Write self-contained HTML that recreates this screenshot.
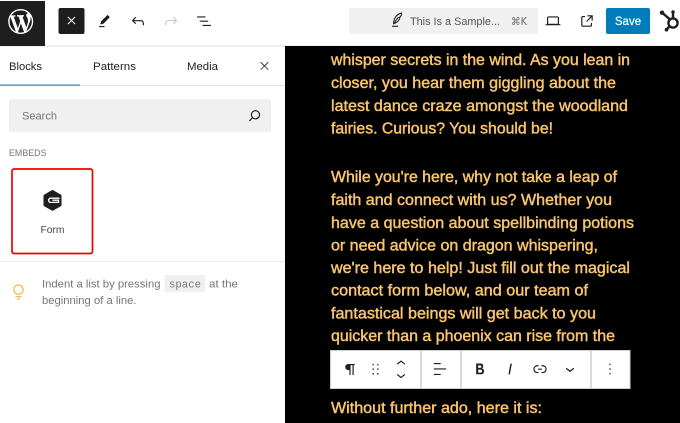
<!DOCTYPE html>
<html lang="en">
<head>
<meta charset="utf-8">
<title>Editor</title>
<style>
html,body{margin:0;padding:0;width:680px;height:423px;overflow:hidden;background:#fff}
svg{display:block;filter:blur(.3px)}
text{font-family:"Liberation Sans",sans-serif}
.c text{font-size:16px;fill:#f8c46c;stroke:#f8c46c;stroke-width:.45px}
.ui{font-size:11px;fill:#1e1e1e}
.g{font-size:11px;fill:#757575}
.i{fill:#1e1e1e}
</style>
</head>
<body>
<svg width="680" height="423" viewBox="0 0 680 423" xmlns="http://www.w3.org/2000/svg">
<rect width="680" height="423" fill="#fff"/>
<!-- Header -->
<rect x="0" y="45.5" width="680" height="1" fill="#e0e0e0"/>
<rect x="0" y="1" width="45" height="45" fill="#1e1e1e"/>
<g transform="translate(8.2 9) scale(1.25)" fill="#fff"><path fill-rule="evenodd" d="M20 10c0-5.51-4.49-10-10-10C4.48 0 0 4.49 0 10c0 5.52 4.48 10 10 10 5.51 0 10-4.48 10-10zM7.78 15.37L4.37 6.22c.55-.02 1.17-.08 1.17-.08.5-.06.44-1.13-.06-1.11 0 0-1.45.11-2.37.11-.18 0-.37 0-.58-.01C4.12 2.69 6.87 1.11 10 1.11c2.33 0 4.45.87 6.05 2.34-.68-.11-1.65.39-1.65 1.58 0 .74.45 1.36.9 2.1.35.61.55 1.36.55 2.46 0 1.49-1.4 5-1.4 5l-3.03-8.37c.54-.02.82-.17.82-.17.5-.05.44-1.25-.06-1.22 0 0-1.44.12-2.38.12-.87 0-2.33-.12-2.33-.12-.5-.03-.56 1.2-.06 1.22l.92.08 1.26 3.41zM17.41 10c.24-.64.74-1.87.43-4.25.7 1.29 1.05 2.71 1.05 4.25 0 3.29-1.73 6.24-4.4 7.78.97-2.59 1.94-5.2 2.92-7.78zM6.1 18.09C3.12 16.65 1.11 13.53 1.11 10c0-1.3.23-2.48.72-3.59C3.25 10.3 4.67 14.2 6.1 18.09zm4.03-6.63l2.58 6.98c-.86.29-1.76.45-2.71.45-.79 0-1.57-.11-2.29-.33.81-2.38 1.62-4.74 2.42-7.1z"/></g>
<rect x="58.500" y="8" width="26" height="26" rx="2" fill="#1e1e1e"/>
<g transform="translate(65.500 14.500) scale(.5)" fill="#fff" stroke="#fff" stroke-width=".8"><path d="m13.060 12 6.470-6.470-1.060-1.060L12 10.940 5.530 4.470 4.470 5.530 10.940 12l-6.470 6.470 1.060 1.060L12 13.060l6.470 6.470 1.060-1.060L13.060 12Z"/></g>
<g transform="translate(95.300 11.800) scale(.767)" class="i"><path d="m19 7-3-3-8.500 8.500-1 4 4-1L19 7Zm-7 11.500H5V20h7v-1.500Z"/></g>
<g transform="translate(128.800 11.800) scale(.767)" class="i"><path d="M18.300 11.700c-.6-.6-1.400-.9-2.300-.9H6.700l2.900-3.300-1.100-1-4.500 5L8.500 16l1-1-2.700-2.700H16c.5 0 .9.2 1.300.5 1 1 1 3.400 1 4.500v.3h1.500v-.2c0-1.500 0-4.300-1.500-5.700z"/></g>
<g transform="translate(161.800 11.800) scale(.767)" fill="#c8c8c8"><path d="M15.600 6.500l-1.100 1 2.900 3.300H8c-.9 0-1.700.3-2.300.9-1.400 1.500-1.400 4.200-1.400 5.600v.2h1.500v-.3c0-1.100 0-3.500 1-4.500.3-.3.7-.5 1.300-.5h9.200L14.500 15l1.100 1.100 4.600-4.600-4.600-5z"/></g>
<g transform="translate(194.800 11.800) scale(.767)" class="i"><path d="M3 6h11v1.500H3V6Zm3.500 5.500h11V13h-11v-1.500ZM21 17H10v1.500h11V17Z"/></g>
<!-- Command center -->
<rect x="349" y="8" width="189" height="26" rx="2" fill="#f0f0f0"/>
<path d="M393.600 24.300c-.2-5.600 2.800-10.300 8-11.200-.1 2.100-.8 3.600-2.200 4.300l.5.500c-.8 2.700-2.900 4.700-5.500 5.400 1-2.300 2.300-4.400 4-6.200" fill="none" stroke="#1e1e1e" stroke-width="1.100"/>
<rect x="392" y="25.700" width="6.200" height="1.100" fill="#1e1e1e"/>
<text x="410" y="25" style="font-size:11px;fill:#50575e" textLength="90" lengthAdjust="spacingAndGlyphs">This Is a Sample...</text>
<text x="511" y="25" style="font-family:'DejaVu Sans',sans-serif;font-size:10.500px;fill:#6a6a6a" textLength="16" lengthAdjust="spacingAndGlyphs">⌘K</text>
<g transform="translate(543.800 11.800) scale(.767)" class="i"><path d="M20.500 16h-.7V8c0-1.100-.9-2-2-2H6.200c-1.100 0-2 .9-2 2v8h-.7c-.8 0-1.500.7-1.500 1.500h20c0-.8-.7-1.500-1.500-1.500zM5.700 8c0-.3.2-.5.5-.5h11.600c.3 0 .5.2.5.5v7.600H5.700V8z"/></g>
<g transform="translate(577.800 11.800) scale(.767)" class="i"><path d="M19.500 4.500h-7V6h4.440l-5.970 5.970 1.060 1.060L18 7.060v4.440h1.500v-7Zm-13 1a2 2 0 0 0-2 2v10a2 2 0 0 0 2 2h10a2 2 0 0 0 2-2v-3H17v3a.5.5 0 0 1-.5.5h-10a.5.5 0 0 1-.5-.5v-10a.5.5 0 0 1 .5-.5h3V5.500h-3Z"/></g>
<rect x="606" y="8" width="44" height="26" rx="2" fill="#007cba"/>
<text x="628" y="25" text-anchor="middle" style="font-size:11.500px;fill:#fff;stroke:#fff;stroke-width:.2px">Save</text>
<!-- HubSpot -->
<g fill="none" stroke="#1e1e1e" stroke-width="2.400">
<circle cx="673" cy="23" r="4.600"/>
<path d="M662.500 13l7.300 6.300M673 18V12M669.500 26.500L666.500 29.500"/>
</g>
<g class="i"><circle cx="662" cy="12.700" r="2.200"/><circle cx="673" cy="12" r="1.700"/><circle cx="666.500" cy="29.700" r="1.800"/></g>
<!-- Sidebar tabs -->
<text x="9" y="70" class="ui" textLength="33" lengthAdjust="spacingAndGlyphs">Blocks</text>
<text x="93" y="70" class="ui" textLength="43" lengthAdjust="spacingAndGlyphs">Patterns</text>
<text x="187" y="70" class="ui" textLength="31" lengthAdjust="spacingAndGlyphs">Media</text>
<g transform="translate(258 59.500) scale(.54)" class="i"><path d="m13.060 12 6.470-6.470-1.060-1.060L12 10.940 5.530 4.470 4.470 5.530 10.940 12l-6.470 6.470 1.060 1.060L12 13.060l6.470 6.470 1.060-1.060L13.060 12Z"/></g>
<rect x="0" y="85" width="285" height="1" fill="#e0e0e0"/>
<rect x="0" y="84.500" width="80" height="1.200" fill="#3a84c0"/>
<!-- Search -->
<rect x="9" y="99" width="262" height="33" rx="2" fill="#f0f0f0"/>
<text x="22" y="119.500" class="g" textLength="35" lengthAdjust="spacingAndGlyphs">Search</text>
<g transform="translate(245.500 106.300) scale(.767)" class="i"><path d="M13 5c-3.300 0-6 2.700-6 6 0 1.400.5 2.700 1.300 3.700l-3.800 3.800 1.100 1.100 3.800-3.800c1 .8 2.300 1.300 3.700 1.300 3.300 0 6-2.700 6-6S16.300 5 13 5zm0 10.500c-2.500 0-4.500-2-4.500-4.500s2-4.500 4.500-4.500 4.500 2 4.500 4.500-2 4.500-4.500 4.500z"/></g>
<!-- Embeds -->
<text x="9" y="156" style="font-size:9px;fill:#757575" textLength="37.500" lengthAdjust="spacingAndGlyphs">EMBEDS</text>
<rect x="12" y="169" width="80.500" height="84.500" rx="2" fill="#fff" stroke="#f00000" stroke-width="1.700"/>
<path d="M52.500 191l8 4.600v9.600l-8 4.600-8-4.600v-9.600z" fill="#1e1e1e" stroke="#1e1e1e" stroke-width="2" stroke-linejoin="round"/>
<path d="M59.500 198.200H50.500c-1 0-1.800.7-1.800 1.700v.8c0 1 .8 1.700 1.800 1.700h8v-2.200h-6" fill="none" stroke="#fff" stroke-width="1.300"/>
<text x="52.500" y="233" text-anchor="middle" style="font-size:10.500px;fill:#444" textLength="24" lengthAdjust="spacingAndGlyphs">Form</text>
<rect x="0" y="261" width="285" height="1" fill="#ececec"/>
<!-- Tip -->
<g transform="translate(9.300 282.700) scale(.767)" fill="#f0b849"><path d="M12 15.800c-3.700 0-6.800-3-6.800-6.800s3-6.800 6.800-6.800c3.700 0 6.800 3 6.800 6.800s-3.100 6.800-6.800 6.800zm0-12C9.100 3.800 6.800 6.100 6.800 9s2.400 5.200 5.200 5.200c2.900 0 5.200-2.400 5.200-5.200S14.900 3.800 12 3.800zM8 17.500h8V19H8zM10 20.500h4V22h-4z"/></g>
<text x="42" y="287.500" class="g" textLength="118.500" lengthAdjust="spacingAndGlyphs">Indent a list by pressing</text>
<rect x="164.500" y="275" width="40.500" height="17" fill="#f0f0f0"/>
<text x="169" y="287.500" style="font-family:'Liberation Mono',monospace;font-size:11px;fill:#757575" textLength="32" lengthAdjust="spacingAndGlyphs">space</text>
<text x="209" y="287.500" class="g" textLength="29" lengthAdjust="spacingAndGlyphs">at the</text>
<text x="42" y="304" class="g" textLength="94.500" lengthAdjust="spacingAndGlyphs">beginning of a line.</text>
<!-- Canvas -->
<rect x="285" y="46" width="395" height="377" fill="#000"/>
<g class="c">
<text x="331" y="65" textLength="299" lengthAdjust="spacingAndGlyphs">whisper secrets in the wind. As you lean in</text>
<text x="331" y="88" textLength="285" lengthAdjust="spacingAndGlyphs">closer, you hear them giggling about the</text>
<text x="331" y="111" textLength="297" lengthAdjust="spacingAndGlyphs">latest dance craze amongst the woodland</text>
<text x="331" y="133.500" textLength="222" lengthAdjust="spacingAndGlyphs">fairies. Curious? You should be!</text>
<text x="331" y="182" textLength="286" lengthAdjust="spacingAndGlyphs">While you're here, why not take a leap of</text>
<text x="331" y="205" textLength="281" lengthAdjust="spacingAndGlyphs">faith and connect with us? Whether you</text>
<text x="331" y="228" textLength="303" lengthAdjust="spacingAndGlyphs">have a question about spellbinding potions</text>
<text x="331" y="250.500" textLength="267" lengthAdjust="spacingAndGlyphs">or need advice on dragon whispering,</text>
<text x="331" y="273" textLength="299" lengthAdjust="spacingAndGlyphs">we're here to help! Just fill out the magical</text>
<text x="331" y="295.500" textLength="257" lengthAdjust="spacingAndGlyphs">contact form below, and our team of</text>
<text x="331" y="318.500" textLength="265" lengthAdjust="spacingAndGlyphs">fantastical beings will get back to you</text>
<text x="331" y="341" textLength="284" lengthAdjust="spacingAndGlyphs">quicker than a phoenix can rise from the</text>
<text x="331" y="413" textLength="211" lengthAdjust="spacingAndGlyphs">Without further ado, here it is:</text>
</g>
<!-- Block toolbar -->
<rect x="330.500" y="350.500" width="299.500" height="38" fill="#fff" stroke="#cfcfcf" stroke-width="1"/>
<rect x="420.500" y="351" width="1" height="37" fill="#b5b5b5"/>
<rect x="460.500" y="351" width="1" height="37" fill="#b5b5b5"/>
<rect x="590.500" y="351" width="1" height="37" fill="#b5b5b5"/>
<g class="i">
<g transform="translate(341 359.800) scale(.767)"><path d="M18 5.500H9.500a4 4 0 0 0 0 8H11V20h1.500V7H15v13h1.500V7H18z"/></g>
<g transform="translate(366.300 360) scale(.767)" fill="#555"><path d="M8 7h2V5H8v2zm0 6h2v-2H8v2zm0 6h2v-2H8v2zm6-14v2h2V5h-2zm0 8h2v-2h-2v2zm0 6h2v-2h-2v2z"/></g>
<g transform="translate(391.800 354.200) scale(.767)"><path d="M6.500 12.400L12 8l5.500 4.400-.9 1.200L12 10l-4.500 3.600-1-1.200z"/></g>
<g transform="translate(391.800 366) scale(.767)"><path d="M17.500 11.600L12 16l-5.500-4.400.9-1.200L12 14l4.500-3.600 1 1.200z"/></g>
<g transform="translate(430.800 359.800) scale(.767)"><path d="M4 19.800h8.900v-1.500H4v1.500zm8.900-15.600H4v1.500h8.900V4.200zm-8.900 7v1.500h16v-1.500H4z"/></g>
<g transform="translate(470.800 359.800) scale(.767)"><path d="M14.700 11.300c1-.6 1.500-1.600 1.500-3 0-2.300-1.300-3.400-4-3.400H7v14h5.800c1.400 0 2.500-.3 3.300-1 .8-.7 1.200-1.700 1.200-2.900.1-1.900-.8-3.100-2.600-3.700zm-5.100-4h2.300c.6 0 1.100.1 1.400.4.3.3.5.7.5 1.200s-.2 1-.5 1.200c-.3.3-.8.4-1.400.4H9.600V7.300zm4.600 9c-.4.3-1 .4-1.700.4H9.600v-3.900h2.900c.7 0 1.300.2 1.700.5.4.3.6.8.6 1.500s-.2 1.200-.6 1.500z"/></g>
<g transform="translate(500.800 359.800) scale(.767)"><path d="M12.500 5L10 19h1.900l2.500-14z"/></g>
<g transform="translate(530.800 359.800) scale(.767)"><path d="M10 17.389H8.444A5.194 5.194 0 1 1 8.444 7H10v1.500H8.444a3.694 3.694 0 0 0 0 7.389H10v1.500ZM14 7h1.556a5.194 5.194 0 0 1 0 10.390H14v-1.500h1.556a3.694 3.694 0 0 0 0-7.390H14V7Zm-4.500 6h5v-1.500h-5V13Z"/></g>
<g transform="translate(560.800 359.800) scale(.767)"><path d="M17.500 11.600L12 16l-5.500-4.400.9-1.200L12 14l4.500-3.600 1 1.200z"/></g>
<g transform="translate(600.800 359.800) scale(.767)" fill="#555"><path d="M13 19h-2v-2h2v2zm0-6h-2v-2h2v2zm0-6h-2V5h2v2z"/></g>
</g>
</svg>
</body>
</html>
